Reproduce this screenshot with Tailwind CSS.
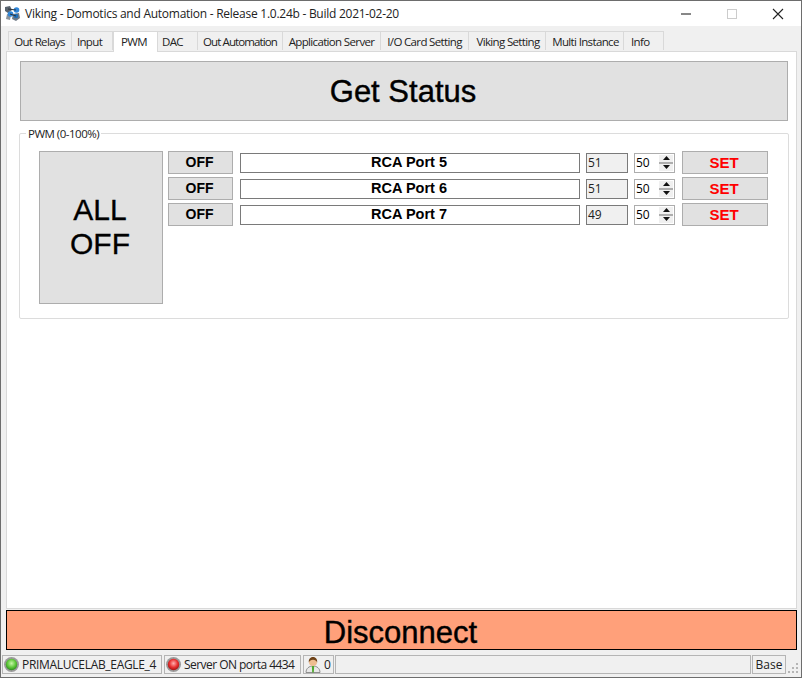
<!DOCTYPE html>
<html lang="en">
<head>
    <meta charset="UTF-8">
    <title>Viking - Domotics and Automation</title>
    <script src="https://cdn.jsdelivr.net/npm/@tailwindcss/browser@4"></script>
</head>
<body class="bg-[#f0f0f0] overflow-hidden">
    <div class="w-[802px] h-[678px] flex flex-col border border-[#6d6d6d] font-['Open_Sans',sans-serif] text-black overflow-hidden">
        <!-- Title bar -->
        <div class="h-[25px] shrink-0 bg-white flex items-center">
            <svg class="w-[17px] h-[17px] ml-[3px] mr-[4px]" viewBox="0 0 17 17">
                <path d="M1 2l5-1 2 4-4 3-3-2z" fill="#59636e"/>
                <path d="M9 9l6-1 1 5-4 3-4-2z" fill="#6f7a86"/>
                <path d="M3 9l4 1-1 5-4-1z" fill="#8a949e"/>
                <circle cx="6.500" cy="9" r="2.800" fill="#2f86d8"/>
                <circle cx="12.500" cy="5" r="2.800" fill="#2f86d8"/>
                <circle cx="12" cy="11" r="2.300" fill="#1f6fb8"/>
                <path d="M4 4l8 1M6 9l6 2" stroke="#2c343c" stroke-width="1"/>
            </svg>
            <span class="text-[12px] tracking-[-0.26px] text-[#222]">Viking - Domotics and Automation - Release 1.0.24b - Build 2021-02-20</span>
            <div class="ml-auto flex items-center">
                <svg class="w-[46px] h-[25px]" viewBox="0 0 46 25"><path d="M18 13h10" stroke="#111" stroke-width="1"/></svg>
                <svg class="w-[46px] h-[25px]" viewBox="0 0 46 25"><rect x="18.5" y="8.5" width="9" height="9" fill="none" stroke="#ccc"/></svg>
                <svg class="w-[46px] h-[25px]" viewBox="0 0 46 25"><path d="M18 8l10 10M28 8l-10 10" stroke="#222" stroke-width="1.1"/></svg>
            </div>
        </div>

        <!-- Tabs -->
        <div class="flex-1 min-h-0 flex flex-col px-[5px]">
            <div class="h-[25px] shrink-0 flex items-end text-[11.5px] tracking-[-0.65px] text-[#222] pl-[2px]">
                <div class="w-[64px] h-[19px] mb-px pt-px pr-px bg-[#f0f0f0] border border-b-0 border-[#d9d9d9] flex items-center justify-center">Out Relays</div>
                <div class="w-[41px] h-[19px] mb-px pt-px pr-[5px] bg-[#f0f0f0] border border-l-0 border-b-0 border-[#d9d9d9] flex items-center justify-center">Input</div>
                <div class="w-[45px] h-[21px] -mb-px relative bg-white border border-b-0 border-[#d9d9d9] flex items-center justify-center pb-[1px] pr-[3px]">PWM</div>
                <div class="w-[40px] h-[19px] mb-px pt-px pr-[10px] bg-[#f0f0f0] border border-l-0 border-b-0 border-[#d9d9d9] flex items-center justify-center">DAC</div>
                <div class="w-[85px] h-[19px] mb-px pt-px bg-[#f0f0f0] border border-l-0 border-b-0 border-[#d9d9d9] flex items-center justify-center tracking-[-0.9px]">Out Automation</div>
                <div class="w-[98px] h-[19px] mb-px pt-px bg-[#f0f0f0] border border-l-0 border-b-0 border-[#d9d9d9] flex items-center justify-center">Application Server</div>
                <div class="w-[88px] h-[19px] mb-px pt-px bg-[#f0f0f0] border border-l-0 border-b-0 border-[#d9d9d9] flex items-center justify-center">I/O Card Setting</div>
                <div class="w-[77px] h-[19px] mb-px pt-px pl-[2px] bg-[#f0f0f0] border border-l-0 border-b-0 border-[#d9d9d9] flex items-center justify-center">Viking Setting</div>
                <div class="w-[78px] h-[19px] mb-px pt-px pl-[2px] bg-[#f0f0f0] border border-l-0 border-b-0 border-[#d9d9d9] flex items-center justify-center">Multi Instance</div>
                <div class="w-[40px] h-[19px] mb-px pt-px bg-[#f0f0f0] border border-l-0 border-b-0 border-[#d9d9d9] flex items-center pl-[7px]">Info</div>
            </div>

            <!-- Tab page -->
            <div class="flex-1 min-h-0 bg-white border border-[#d9d9d9] mr-[-1px] px-[13px] pt-[9px] font-['Liberation_Sans',sans-serif]">
                <button class="w-[768px] h-[60px] block pr-[2px] bg-[#e1e1e1] border border-[#adadad] text-[31px] leading-none [-webkit-text-stroke:0.4px_black]">Get Status</button>

                <!-- Group box -->
                <div class="relative w-[770px] h-[186px] mt-[12px] -ml-px border border-[#dcdcdc] rounded-[2px] pl-[19px] pt-[17px] flex gap-[5px]">
                    <span class="absolute left-[6px] -top-[8px] bg-white px-[2px] text-[11.5px] tracking-[-0.5px] leading-[15px] text-[#222] font-['Open_Sans',sans-serif]">PWM (0-100%)</span>
                    <button class="w-[124px] h-[153px] pb-[2px] pr-[2px] bg-[#e1e1e1] border border-[#adadad] text-[30px] leading-[34px] [-webkit-text-stroke:0.3px_black]">ALL<br>OFF</button>
                    <div class="flex flex-col gap-[3px]">
                        <div class="flex h-[23px] items-center">
                            <button class="w-[65px] h-[23px] pr-[2px] bg-[#e1e1e1] border border-[#adadad] text-[14px] font-bold">OFF</button>
                            <div class="ml-[7px] w-[340px] h-[20px] pt-px pr-[2px] border border-[#7a7a7a] flex items-center justify-center text-[14.5px] font-bold">RCA Port 5</div>
                            <div class="ml-[6px] w-[42px] h-[20px] border border-[#7a7a7a] bg-[#f0f0f0] flex items-center pl-[1px] text-[12px] text-[#222] font-['Open_Sans',sans-serif]">51</div>
                            <div class="ml-[6px] w-[41px] h-[20px] border border-[#adadad] flex items-center justify-between pl-[1px] pr-[1px] text-[12px] font-['Open_Sans',sans-serif]">
                                <span>50</span>
                                <div class="w-[14px] h-[16px] bg-[#adadad] flex flex-col gap-[2px]">
                                    <div class="h-[7px] bg-[#f0f0f0] flex items-center justify-center"><svg class="w-[7px] h-[4px]" viewBox="0 0 7 4"><path d="M3.5 0L7 4H0z" fill="#111"/></svg></div>
                                    <div class="h-[7px] bg-[#f0f0f0] flex items-center justify-center"><svg class="w-[7px] h-[4px]" viewBox="0 0 7 4"><path d="M0 0H7L3.5 4z" fill="#111"/></svg></div>
                                </div>
                            </div>
                            <button class="ml-[7px] w-[86px] h-[23px] pr-[2px] bg-[#e1e1e1] border border-[#adadad] text-[15px] font-bold text-[#ff0000]">SET</button>
                        </div>
                        <div class="flex h-[23px] items-center">
                            <button class="w-[65px] h-[23px] pr-[2px] bg-[#e1e1e1] border border-[#adadad] text-[14px] font-bold">OFF</button>
                            <div class="ml-[7px] w-[340px] h-[20px] pt-px pr-[2px] border border-[#7a7a7a] flex items-center justify-center text-[14.5px] font-bold">RCA Port 6</div>
                            <div class="ml-[6px] w-[42px] h-[20px] border border-[#7a7a7a] bg-[#f0f0f0] flex items-center pl-[1px] text-[12px] text-[#222] font-['Open_Sans',sans-serif]">51</div>
                            <div class="ml-[6px] w-[41px] h-[20px] border border-[#adadad] flex items-center justify-between pl-[1px] pr-[1px] text-[12px] font-['Open_Sans',sans-serif]">
                                <span>50</span>
                                <div class="w-[14px] h-[16px] bg-[#adadad] flex flex-col gap-[2px]">
                                    <div class="h-[7px] bg-[#f0f0f0] flex items-center justify-center"><svg class="w-[7px] h-[4px]" viewBox="0 0 7 4"><path d="M3.5 0L7 4H0z" fill="#111"/></svg></div>
                                    <div class="h-[7px] bg-[#f0f0f0] flex items-center justify-center"><svg class="w-[7px] h-[4px]" viewBox="0 0 7 4"><path d="M0 0H7L3.5 4z" fill="#111"/></svg></div>
                                </div>
                            </div>
                            <button class="ml-[7px] w-[86px] h-[23px] pr-[2px] bg-[#e1e1e1] border border-[#adadad] text-[15px] font-bold text-[#ff0000]">SET</button>
                        </div>
                        <div class="flex h-[23px] items-center">
                            <button class="w-[65px] h-[23px] pr-[2px] bg-[#e1e1e1] border border-[#adadad] text-[14px] font-bold">OFF</button>
                            <div class="ml-[7px] w-[340px] h-[20px] pt-px pr-[2px] border border-[#7a7a7a] flex items-center justify-center text-[14.5px] font-bold">RCA Port 7</div>
                            <div class="ml-[6px] w-[42px] h-[20px] border border-[#7a7a7a] bg-[#f0f0f0] flex items-center pl-[1px] text-[12px] text-[#222] font-['Open_Sans',sans-serif]">49</div>
                            <div class="ml-[6px] w-[41px] h-[20px] border border-[#adadad] flex items-center justify-between pl-[1px] pr-[1px] text-[12px] font-['Open_Sans',sans-serif]">
                                <span>50</span>
                                <div class="w-[14px] h-[16px] bg-[#adadad] flex flex-col gap-[2px]">
                                    <div class="h-[7px] bg-[#f0f0f0] flex items-center justify-center"><svg class="w-[7px] h-[4px]" viewBox="0 0 7 4"><path d="M3.5 0L7 4H0z" fill="#111"/></svg></div>
                                    <div class="h-[7px] bg-[#f0f0f0] flex items-center justify-center"><svg class="w-[7px] h-[4px]" viewBox="0 0 7 4"><path d="M0 0H7L3.5 4z" fill="#111"/></svg></div>
                                </div>
                            </div>
                            <button class="ml-[7px] w-[86px] h-[23px] pr-[2px] bg-[#e1e1e1] border border-[#adadad] text-[15px] font-bold text-[#ff0000]">SET</button>
                        </div>
                    </div>
                </div>
            </div>

            <!-- Disconnect -->
            <button class="w-[791px] h-[40px] shrink-0 mt-px pt-[4px] pr-[2px] bg-[#ffa07a] border border-black font-['Liberation_Sans',sans-serif] text-[31px] leading-none [-webkit-text-stroke:0.4px_black]">Disconnect</button>
        </div>

        <!-- Status bar -->
        <div class="h-[22px] shrink-0 mt-[5px] flex items-start pl-[1px] gap-[2px] text-[12px] text-[#222]">
            <div class="w-[160px] h-[19px] border border-[#b5b5b5] flex items-center gap-[3px] pl-[1px] whitespace-nowrap">
                <svg class="w-[15px] h-[15px] shrink-0" viewBox="0 0 15 15">
                    <defs><radialGradient id="ledGreen" cx="0.5" cy="0.4" r="0.6"><stop offset="0" stop-color="#c8f5a8"/><stop offset="0.6" stop-color="#5fc83a"/><stop offset="1" stop-color="#2f8a1e"/></radialGradient></defs>
                    <circle cx="7.5" cy="7.5" r="7.500" fill="#9a9a9a"/><circle cx="7.5" cy="7.5" r="5.700" fill="url(#ledGreen)"/>
                </svg>
                <span class="tracking-[-0.32px]">PRIMALUCELAB_EAGLE_4</span>
            </div>
            <div class="w-[137px] h-[19px] border border-[#b5b5b5] flex items-center gap-[3px] pl-[1px] whitespace-nowrap">
                <svg class="w-[15px] h-[15px] shrink-0" viewBox="0 0 15 15">
                    <defs><radialGradient id="ledRed" cx="0.5" cy="0.4" r="0.6"><stop offset="0" stop-color="#ffb0b0"/><stop offset="0.6" stop-color="#e83030"/><stop offset="1" stop-color="#a01515"/></radialGradient></defs>
                    <circle cx="7.5" cy="7.5" r="7.500" fill="#9a9a9a"/><circle cx="7.5" cy="7.5" r="5.700" fill="url(#ledRed)"/>
                </svg>
                <span class="tracking-[-0.55px]">Server ON porta 4434</span>
            </div>
            <div class="w-[31px] h-[19px] border border-[#b5b5b5] flex items-center gap-[3px] pl-[1px]">
                <svg class="w-[16px] h-[17px] shrink-0" viewBox="0 0 15 17">
                    <path d="M0.500 16.500c0-4 3-6.500 7-6.500s7 2.500 7 6.500z" fill="#e8e8e8" stroke="#777" stroke-width="0.8"/>
                    <path d="M6.300 10h2.400l-.4 6.500h-1.600z" fill="#4fa82e"/>
                    <circle cx="7.500" cy="6" r="4" fill="#eebd90"/>
                    <path d="M3.300 6.500c-.4-4 2.200-5.500 4.200-5.500s4.600 1.500 4.200 5.500c-.8-1.900-2.200-2.700-4.200-2.700s-3.400.8-4.200 2.700z" fill="#6e4218"/>
                </svg>
                <span>0</span>
            </div>
            <div class="w-[416px] h-[19px] -ml-px border border-[#b5b5b5]"></div>
            <div class="w-[34px] h-[19px] -ml-px border border-[#b5b5b5] flex items-center justify-center">Base</div>
            <svg class="w-[12px] h-[12px] mt-[8px]" viewBox="0 0 12 12" fill="#b5b5b5">
                <rect x="8" y="0" width="2" height="2"/><rect x="4" y="4" width="2" height="2"/><rect x="8" y="4" width="2" height="2"/><rect x="0" y="8" width="2" height="2"/><rect x="4" y="8" width="2" height="2"/><rect x="8" y="8" width="2" height="2"/>
            </svg>
        </div>
    </div>
</body>
</html>
